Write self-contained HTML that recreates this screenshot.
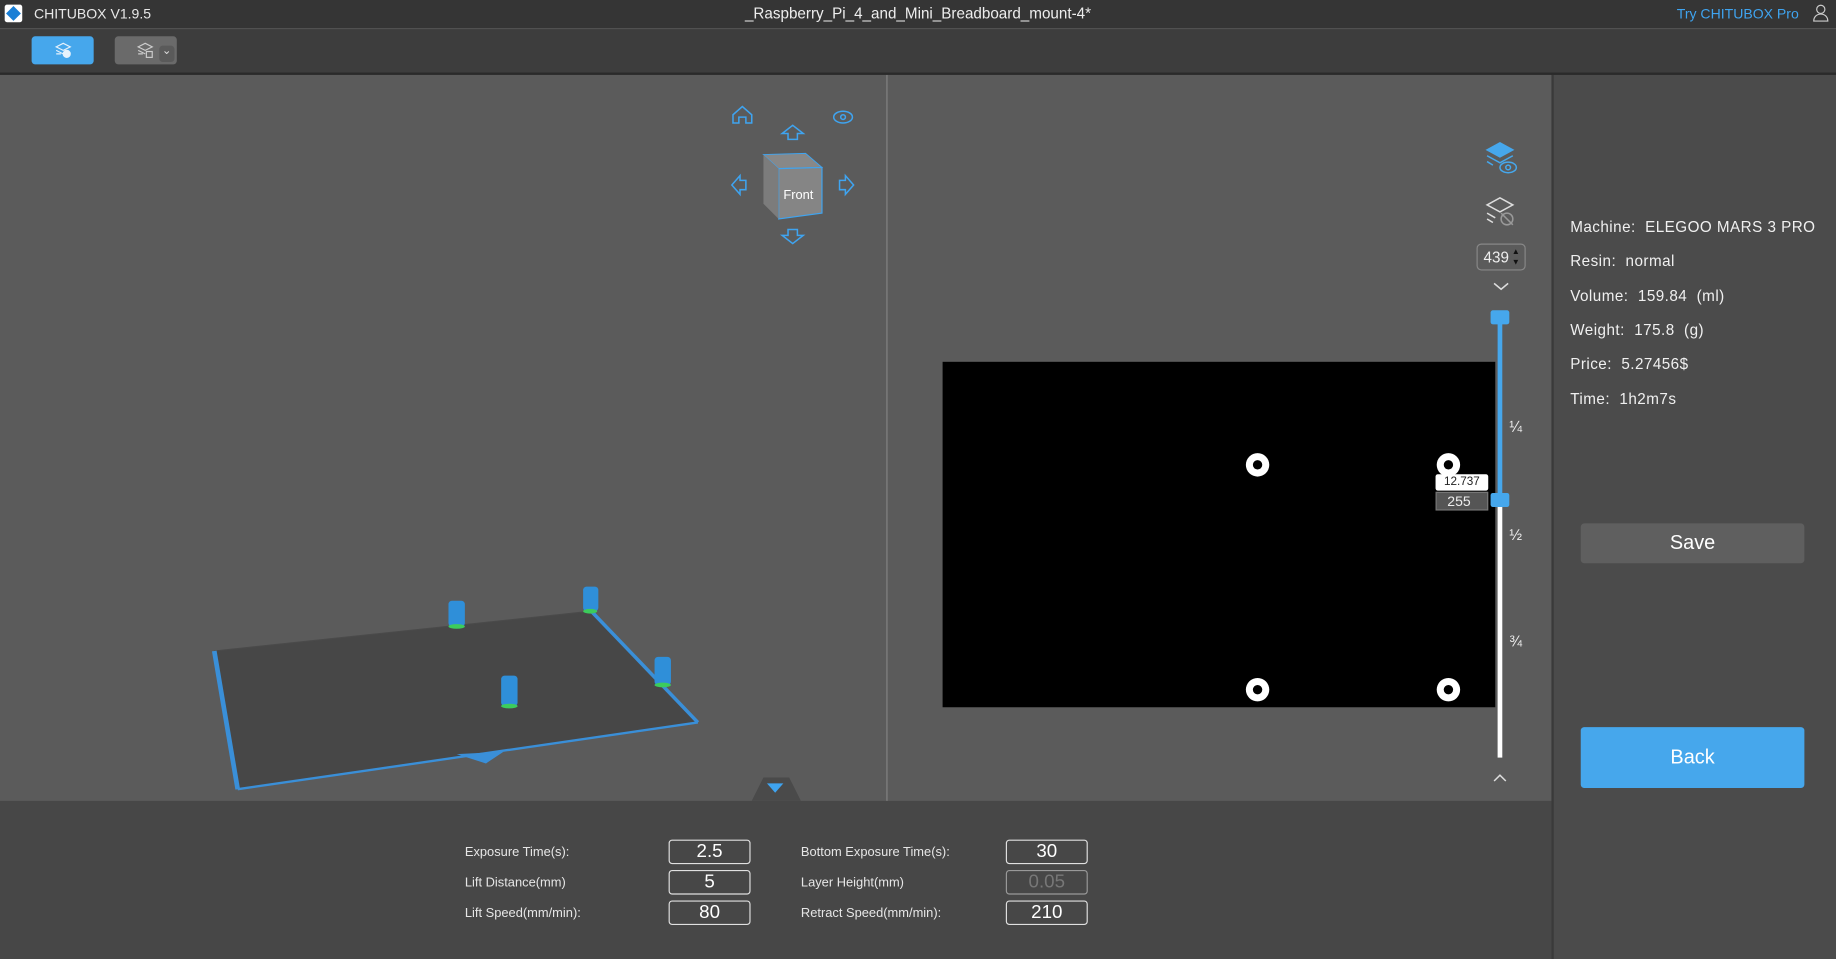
<!DOCTYPE html>
<html><head><meta charset="utf-8"><style>
html,body{margin:0;padding:0;width:1836px;height:959px;overflow:hidden;background:#4a4a4a;font-family:"Liberation Sans",sans-serif}
#s{position:absolute;left:0;top:0;width:1568px;height:819px;transform:scale(1.17092,1.17094);transform-origin:0 0}
.a{position:absolute}
.lbl{position:absolute;color:#e6e6e6;font-size:11px}
.box{position:absolute;width:68px;height:19px;border:1px solid #e0e0e0;border-radius:3px;color:#fff;font-size:16px;text-align:center;line-height:19px}
.info{position:absolute;left:1341px;color:#f0f0f0;font-size:13px;letter-spacing:.4px}
</style></head><body><div id="s">
<div class="a" style="left:0;top:0;width:1568px;height:24px;background:#353535;border-bottom:1px solid #555"></div>
<div class="a" style="left:4px;top:4px;width:15px;height:15px;background:#fff;border-radius:2px"><div style="position:absolute;left:3px;top:3px;width:9px;height:9px;background:#1a7fd6;transform:rotate(45deg)"></div></div>
<div class="a" style="left:29px;top:5px;color:#e8e8e8;font-size:12px">CHITUBOX V1.9.5</div>
<div class="a" style="left:0;top:4px;width:1568px;text-align:center;color:#eee;font-size:13px">_Raspberry_Pi_4_and_Mini_Breadboard_mount-4*</div>
<div class="a" style="left:1432px;top:5px;color:#3fa4f0;font-size:12px">Try CHITUBOX Pro</div>
<svg class="a" style="left:1548px;top:3px" width="14" height="16" viewBox="0 0 14 16"><circle cx="7" cy="5" r="3.5" fill="none" stroke="#ccc"/><path d="M1 15c0-4 3-6 6-6s6 2 6 6z" fill="none" stroke="#ccc"/></svg>
<div class="a" style="left:0;top:25px;width:1568px;height:37px;background:#3d3d3d;border-bottom:2px solid #2a2a2a"></div>
<div class="a" style="left:27px;top:31px;width:53px;height:24px;background:#46a7ec;border-radius:3px"></div>
<div class="a" style="left:98px;top:31px;width:53px;height:24px;background:#6a6a6a;border-radius:3px"></div>
<svg class="a" style="left:46px;top:36px" width="16" height="14" fill="none" stroke="#e6f2fc" stroke-width="1"><path d="M2 4l6-3 6 3-6 3z"/><path d="M2 7l6 3"/><path d="M2 10h4"/><circle cx="11" cy="10" r="3" fill="#e6f2fc"/></svg>
<svg class="a" style="left:116px;top:36px" width="16" height="14" fill="none" stroke="#ccc" stroke-width="1"><path d="M2 4l6-3 6 3-6 3z"/><path d="M2 7l6 3"/><path d="M2 10h4"/><rect x="9" y="8" width="5" height="5"/></svg>
<div class="a" style="left:136px;top:39px;width:13px;height:14px;background:#5a5a5a;border-radius:3px;color:#ddd;font-size:10px;text-align:center;line-height:10px">⌄</div>
<!-- viewport -->
<div class="a" style="left:0;top:64px;width:757px;height:620px;background:#5b5b5b"></div>
<div class="a" style="left:757px;top:64px;width:1px;height:620px;background:#888"></div>
<div class="a" style="left:758px;top:64px;width:567px;height:620px;background:#5b5b5b"></div>
<div class="a" style="left:1325px;top:64px;width:2px;height:755px;background:#3a3a3a"></div>
<div class="a" style="left:1327px;top:64px;width:241px;height:755px;background:#4b4b4b"></div>
<!-- plate -->
<svg class="a" style="left:0;top:64px" width="757" height="620">
<polygon points="183,492 505,458 596,553 203,610" fill="#474747"/>
<path d="M183,492 L505,458" stroke="#4a4a4a" stroke-width="1"/>
<path d="M596,553 L203,610" stroke="#3a8fd8" stroke-width="2"/>
<path d="M183,492 L203,610" stroke="#3a8fd8" stroke-width="4"/>
<path d="M505,458 L596,553" stroke="#3a8fd8" stroke-width="3"/>
<polygon points="390,580 430,578 415,588" fill="#3a8fd8"/>
<g fill="#2f8fd9"><rect x="383" y="449" width="14" height="22" rx="3"/><rect x="498" y="437" width="13" height="21" rx="3"/><rect x="559" y="497" width="14" height="24" rx="3"/><rect x="428" y="513" width="14" height="26" rx="3"/></g>
<g fill="#3ccc5c"><ellipse cx="390" cy="471" rx="7" ry="2"/><ellipse cx="504" cy="458" rx="6" ry="2"/><ellipse cx="566" cy="521" rx="7" ry="2"/><ellipse cx="435" cy="539" rx="7" ry="2"/></g>
<g fill="none" stroke="#3fa4f0" stroke-width="1.3">
<path d="M626 34l8-7 8 7v7h-5v-5h-6v5h-5z"/>
<path d="M668 50l9-7 9 7h-5v5h-8v-5z"/>
<path d="M668 137l9 7 9-7h-5v-5h-8v5z"/>
<path d="M632 86l-7 8 7 8v-4h5v-8h-5z"/>
<path d="M722 86l7 8-7 8v-4h-5v-8h5z"/>
<ellipse cx="720" cy="36" rx="8" ry="5"/><circle cx="720" cy="36" r="2"/>
</g>
<polygon points="652,68 688,67 702,79 665,80" fill="#888" stroke="#3fa4f0" stroke-width=".8"/>
<polygon points="665,80 702,79 702,118 665,123" fill="#858585" stroke="#3fa4f0"/>
<polygon points="652,68 665,80 665,123 652,110" fill="#7c7c7c"/>
<text x="669" y="106" fill="#fff" font-size="11" font-family="Liberation Sans">Front</text>
<polygon points="642,620 652,600 674,600 684,620" fill="#4a4a4a"/>
<polygon points="655,605 669,605 662,613" fill="#3fa4f0"/>
</svg>
<!-- slice -->
<div class="a" style="left:805px;top:309px;width:472px;height:295px;background:#000"></div>
<svg class="a" style="left:805px;top:309px" width="472" height="295"><g fill="#fff"><circle cx="269" cy="88" r="10"/><circle cx="432" cy="88" r="10"/><circle cx="269" cy="280" r="10"/><circle cx="432" cy="280" r="10"/></g><g fill="#000"><circle cx="269" cy="88" r="4"/><circle cx="432" cy="88" r="4"/><circle cx="269" cy="280" r="4"/><circle cx="432" cy="280" r="4"/></g></svg>
<div class="a" style="left:1226px;top:405px;width:45px;height:14px;background:#fff;border-radius:2px;font-size:10px;text-align:center;line-height:14px;color:#222">12.737</div>
<div class="a" style="left:1226px;top:420px;width:45px;height:16px;background:#555;border:1px solid #777;box-sizing:border-box;font-size:12px;color:#eee;padding-left:9px;line-height:14px">255</div>
<div class="a" style="left:1279px;top:272px;width:4px;height:155px;background:#46a7ec"></div>
<div class="a" style="left:1279px;top:427px;width:4px;height:220px;background:#fff"></div>
<div class="a" style="left:1273px;top:265px;width:16px;height:12px;background:#46a7ec;border-radius:2px"></div>
<div class="a" style="left:1273px;top:421px;width:16px;height:12px;background:#46a7ec;border-radius:2px"></div>
<div class="a" style="left:1289px;top:357px;color:#eee;font-size:13px">¼</div>
<div class="a" style="left:1289px;top:449px;color:#eee;font-size:13px">½</div>
<div class="a" style="left:1289px;top:540px;color:#eee;font-size:13px">¾</div>
<div class="a" style="left:1261px;top:208px;width:42px;height:23px;border:1px solid #888;border-radius:4px;box-sizing:border-box;color:#eee;font-size:13px;line-height:21px;padding-left:5px">439<span style="font-size:7px;position:absolute;right:4px;top:2px;line-height:9px;color:#111">▲<br>▼</span></div>
<svg class="a" style="left:1266px;top:120px" width="32" height="140" fill="none" stroke-width="1.3">
<path d="M4 8l11-6 11 6-11 6z" fill="#46a7ec" stroke="#46a7ec"/><path d="M4 13l11 6 11-6" stroke="#46a7ec"/><path d="M4 18l5 3" stroke="#46a7ec"/><ellipse cx="22" cy="23" rx="7" ry="4.5" stroke="#46a7ec"/><circle cx="22" cy="23" r="2" stroke="#46a7ec"/>
<path d="M4 55l11-6 11 6-11 6z" stroke="#ddd"/><path d="M4 62l7 4M4 67l5 3" stroke="#ddd"/><circle cx="21" cy="67" r="5" stroke="#999"/><path d="M16 62l10 10" stroke="#999"/>
<path d="M10 122l6 5 6-5" stroke="#ddd"/></svg>
<svg class="a" style="left:1275px;top:661px" width="12" height="8" fill="none" stroke="#ddd" stroke-width="1.3"><path d="M1 6l5-5 5 5"/></svg>
<!-- info -->
<div class="info" style="top:186px">Machine:&nbsp; ELEGOO MARS 3 PRO</div>
<div class="info" style="top:215px">Resin:&nbsp; normal</div>
<div class="info" style="top:245px">Volume:&nbsp; 159.84&nbsp; (ml)</div>
<div class="info" style="top:274px">Weight:&nbsp; 175.8&nbsp; (g)</div>
<div class="info" style="top:303px">Price:&nbsp; 5.27456$</div>
<div class="info" style="top:333px">Time:&nbsp; 1h2m7s</div>
<div class="a" style="left:1350px;top:447px;width:191px;height:34px;background:#5f5f5f;border-radius:3px;color:#fff;font-size:17px;text-align:center;line-height:34px">Save</div>
<div class="a" style="left:1350px;top:621px;width:191px;height:52px;background:#46a7ec;border-radius:3px;color:#fff;font-size:17px;text-align:center;line-height:52px">Back</div>
<!-- bottom -->
<div class="a" style="left:0;top:684px;width:1325px;height:135px;background:#474747"></div>
<div class="lbl" style="left:397px;top:722px">Exposure Time(s):</div>
<div class="lbl" style="left:397px;top:748px">Lift Distance(mm)</div>
<div class="lbl" style="left:397px;top:774px">Lift Speed(mm/min):</div>
<div class="lbl" style="left:684px;top:722px">Bottom Exposure Time(s):</div>
<div class="lbl" style="left:684px;top:748px">Layer Height(mm)</div>
<div class="lbl" style="left:684px;top:774px">Retract Speed(mm/min):</div>
<div class="box" style="left:571px;top:717px">2.5</div>
<div class="box" style="left:571px;top:743px">5</div>
<div class="box" style="left:571px;top:769px">80</div>
<div class="box" style="left:859px;top:717px">30</div>
<div class="box" style="left:859px;top:743px;color:#777;border-color:#999">0.05</div>
<div class="box" style="left:859px;top:769px">210</div>
</div></body></html>
